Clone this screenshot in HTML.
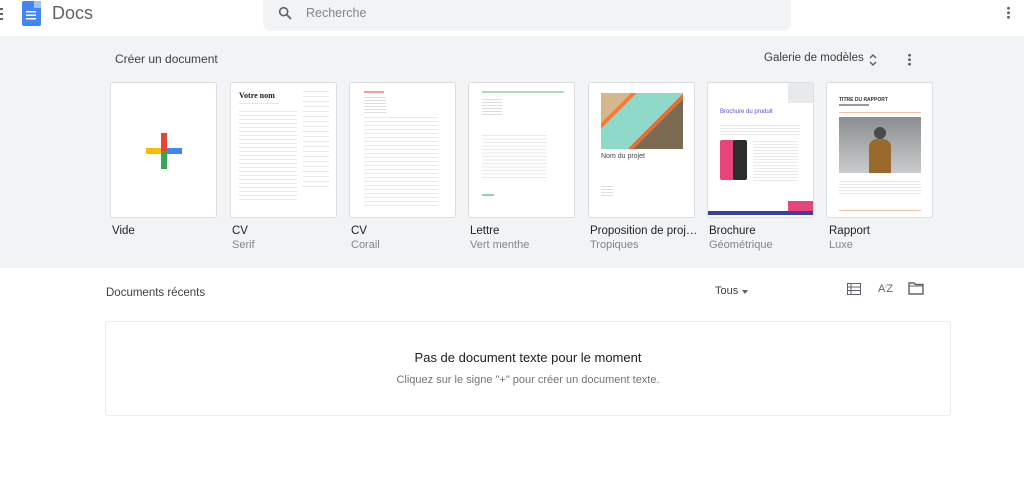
<!DOCTYPE html>
<html><head><meta charset="utf-8">
<style>
*{margin:0;padding:0;box-sizing:border-box}
body{width:1024px;height:503px;overflow:hidden;background:#fff;font-family:"Liberation Sans",Arial,sans-serif;color:#202124;position:relative}
.abs{position:absolute}
.band{position:absolute;left:0;top:36px;width:1024px;height:232px;background:#f1f3f4}
.card{position:absolute;top:82px;width:107px;height:136px;background:#fff;border:1px solid #dadce0;border-radius:3px;overflow:hidden}
.lbl{position:absolute;top:225px;font-size:11.5px;color:#202124;white-space:nowrap}
.sub{position:absolute;top:239px;font-size:11px;color:#80868b;white-space:nowrap}
.ln{position:absolute;height:2px;background:#e3e5e8}
</style></head><body>
<div class="abs" style="left:0;top:8px;width:3px;height:12px;background:repeating-linear-gradient(#5f6368 0 2px,transparent 2px 5px)"></div>
<div class="abs" style="left:22px;top:1px;width:19px;height:25px;background:#4285f4;border-radius:2px"></div>
<div class="abs" style="left:34px;top:1px;width:7px;height:7px;background:#a1c2fa"></div>
<div class="abs" style="left:26px;top:11px;width:10px;height:9px;background:repeating-linear-gradient(#fff 0 1.5px,transparent 1.5px 3.5px)"></div>
<div class="abs" style="left:52px;top:3px;font-size:18px;color:#5f6368">Docs</div>
<div class="abs" style="left:263px;top:0;width:528px;height:31px;background:#f1f3f4;border-radius:0 0 8px 8px"></div>
<svg class="abs" style="left:277px;top:5px" width="16" height="16" viewBox="0 0 24 24"><circle cx="10" cy="10" r="6" fill="none" stroke="#5f6368" stroke-width="2.4"/><path d="M14.5 14.5L21 21" stroke="#5f6368" stroke-width="2.6"/></svg>
<div class="abs" style="left:306px;top:6px;font-size:12.5px;color:#80868b">Recherche</div>
<div class="abs" style="left:1007px;top:6px;width:3px;height:13px;background:radial-gradient(circle,#5f6368 1.3px,transparent 1.6px) 0 0/3px 4.5px"></div>

<div class="band"></div>
<div class="abs" style="left:115px;top:52px;font-size:12px;color:#3c4043">Créer un document</div>
<div class="abs" style="left:764px;top:52px;font-size:11.5px;color:#3c4043">Galerie de modèles</div>
<svg class="abs" style="left:868px;top:53px" width="10" height="14" viewBox="0 0 10 14"><path d="M2 5l3-3 3 3M2 9l3 3 3-3" fill="none" stroke="#5f6368" stroke-width="1.5"/></svg>
<div class="abs" style="left:908px;top:53px;width:3px;height:13px;background:radial-gradient(circle,#5f6368 1.3px,transparent 1.6px) 0 0/3px 4.5px"></div>

<div class="card" style="left:110px">
  <div class="abs" style="left:35px;top:65px;width:36px;height:6px;background:#4285f4"></div>
  <div class="abs" style="left:35px;top:65px;width:17px;height:6px;background:#fbbc04"></div>
  <div class="abs" style="left:50px;top:50px;width:6px;height:18px;background:#ea4335"></div>
  <div class="abs" style="left:50px;top:68px;width:6px;height:18px;background:#34a853"></div>
</div>
<div class="card" style="left:230px">
  <div class="abs" style="left:8px;top:8px;font:bold 8px 'Liberation Serif',serif">Votre nom</div>
  <div class="ln" style="left:8px;top:20px;width:40px;height:1px"></div>
  <div class="abs" style="left:8px;top:28px;width:58px;height:90px;background:repeating-linear-gradient(#e8e9eb 0 1px,transparent 1px 4px)"></div>
  <div class="abs" style="left:72px;top:8px;width:26px;height:100px;background:repeating-linear-gradient(#e8e9eb 0 1px,transparent 1px 5px)"></div>
</div>
<div class="card" style="left:349px">
  <div class="abs" style="left:14px;top:8px;width:20px;height:2px;background:#e8a0a0"></div>
  <div class="abs" style="left:14px;top:14px;width:22px;height:16px;background:repeating-linear-gradient(#dcdee1 0 1px,transparent 1px 3px)"></div>
  <div class="abs" style="left:14px;top:34px;width:74px;height:92px;background:repeating-linear-gradient(#e8e9eb 0 1px,transparent 1px 4px)"></div>
</div>
<div class="card" style="left:468px">
  <div class="abs" style="left:13px;top:8px;width:82px;height:2px;background:#a8dcc0"></div>
  <div class="abs" style="left:13px;top:16px;width:20px;height:16px;background:repeating-linear-gradient(#dcdee1 0 1px,transparent 1px 3px)"></div>
  <div class="abs" style="left:13px;top:52px;width:65px;height:45px;background:repeating-linear-gradient(#e8e9eb 0 1px,transparent 1px 3.5px)"></div>
  <div class="abs" style="left:13px;top:111px;width:12px;height:2px;background:#8fd1b0"></div>
</div>
<div class="card" style="left:588px">
  <div class="abs" style="left:12px;top:10px;width:82px;height:56px;background:linear-gradient(135deg,#d4b88c 0 22%,#f47b3b 22% 26%,#8fd9c9 26% 60%,#e86f2f 60% 64%,#7a6a52 64%)"></div>
  <div class="abs" style="left:12px;top:70px;font-size:7px;color:#444">Nom du projet</div>
  <div class="abs" style="left:12px;top:103px;width:12px;height:12px;background:repeating-linear-gradient(#dcdee1 0 1px,transparent 1px 3px)"></div>
</div>
<div class="card" style="left:707px">
  <div class="abs" style="left:80px;top:0;width:27px;height:20px;background:#e8e9eb"></div>
  <div class="abs" style="left:12px;top:26px;font-size:6px;color:#5c4ad6">Brochure du produit</div>
  <div class="abs" style="left:12px;top:42px;width:80px;height:10px;background:repeating-linear-gradient(#e8e9eb 0 1px,transparent 1px 3px)"></div>
  <div class="abs" style="left:12px;top:57px;width:15px;height:40px;background:#e8437a;border-radius:2px"></div>
  <div class="abs" style="left:25px;top:57px;width:14px;height:40px;background:#2d2d2d;border-radius:2px"></div>
  <div class="abs" style="left:45px;top:58px;width:45px;height:40px;background:repeating-linear-gradient(#e8e9eb 0 1px,transparent 1px 3px)"></div>
  <div class="abs" style="left:80px;top:118px;width:27px;height:10px;background:#e8437a"></div>
  <div class="abs" style="left:0;top:128px;width:107px;height:4px;background:#3b3f9e"></div>
</div>
<div class="card" style="left:826px">
  <div class="abs" style="left:12px;top:14px;font:bold 5px sans-serif;color:#333">TITRE DU RAPPORT</div>
  <div class="abs" style="left:12px;top:21px;width:30px;height:2px;background:#999"></div>
  <div class="abs" style="left:12px;top:29px;width:82px;height:1px;background:#f0c2a8"></div>
  <div class="abs" style="left:12px;top:34px;width:82px;height:56px;background:linear-gradient(#8b8e90,#c9cbcc)"></div>
  <div class="abs" style="left:42px;top:56px;width:22px;height:34px;background:#9a6a2c;border-radius:8px 8px 0 0"></div>
  <div class="abs" style="left:47px;top:44px;width:12px;height:12px;background:#4a4a4a;border-radius:50%"></div>
  <div class="abs" style="left:12px;top:98px;width:82px;height:14px;background:repeating-linear-gradient(#e8e9eb 0 1px,transparent 1px 3px)"></div>
  <div class="abs" style="left:12px;top:127px;width:82px;height:1px;background:#f0c2a8"></div>
</div>

<div class="lbl" style="left:112px">Vide</div>
<div class="lbl" style="left:232px">CV</div><div class="sub" style="left:232px">Serif</div>
<div class="lbl" style="left:351px">CV</div><div class="sub" style="left:351px">Corail</div>
<div class="lbl" style="left:470px">Lettre</div><div class="sub" style="left:470px">Vert menthe</div>
<div class="lbl" style="left:590px">Proposition de proj…</div><div class="sub" style="left:590px">Tropiques</div>
<div class="lbl" style="left:709px">Brochure</div><div class="sub" style="left:709px">Géométrique</div>
<div class="lbl" style="left:829px">Rapport</div><div class="sub" style="left:829px">Luxe</div>

<div class="abs" style="left:106px;top:287px;font-size:11.5px;color:#3c4043">Documents récents</div>
<div class="abs" style="left:715px;top:285px;font-size:11px;color:#3c4043">Tous</div>
<div class="abs" style="left:742px;top:290px;width:0;height:0;border-left:3.5px solid transparent;border-right:3.5px solid transparent;border-top:4px solid #5f6368"></div>
<svg class="abs" style="left:847px;top:283px" width="14" height="12" viewBox="0 0 14 12"><rect x="0.5" y="0.5" width="13" height="11" fill="none" stroke="#5f6368"/><path d="M0 4h14M0 7.5h14M4 0v12" stroke="#5f6368"/></svg>
<div class="abs" style="left:878px;top:283px;font-size:11px;color:#5f6368;letter-spacing:-1px">A<sup style="font-size:6px">↓</sup>Z</div>
<svg class="abs" style="left:908px;top:282px" width="16" height="13" viewBox="0 0 16 13"><path d="M1 1h5l1.5 1.5H15V12H1z" fill="none" stroke="#5f6368" stroke-width="1.4"/><path d="M1 4h14" stroke="#5f6368"/></svg>
<div class="abs" style="left:105px;top:321px;width:846px;height:95px;border:1px solid #ececec;border-radius:3px"></div>
<div class="abs" style="left:105px;top:350px;width:846px;text-align:center;font-size:13px;color:#202124">Pas de document texte pour le moment</div>
<div class="abs" style="left:105px;top:374px;width:846px;text-align:center;font-size:11px;color:#70757a">Cliquez sur le signe "+" pour créer un document texte.</div>
</body></html>
